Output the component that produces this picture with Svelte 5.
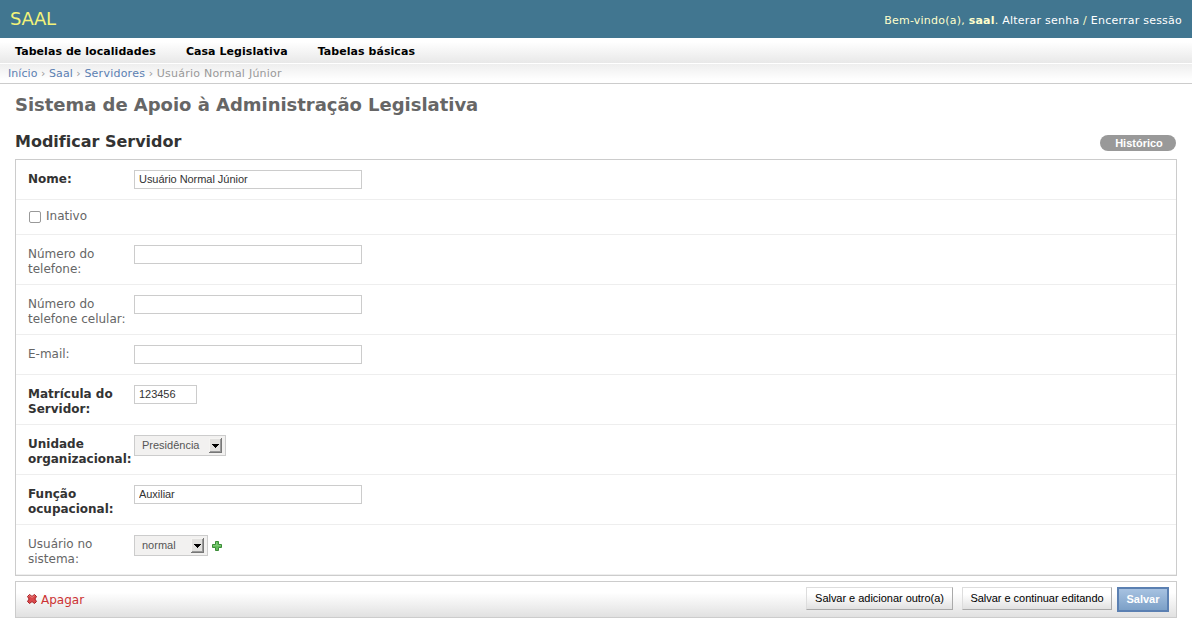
<script>
  const menu = ['Tabelas de localidades', 'Casa Legislativa', 'Tabelas básicas'];
  const rows = [
    { id: 'nome', label: 'Nome:', required: true, type: 'text', value: 'Usuário Normal Júnior', height: 40 },
    { id: 'inativo', label: 'Inativo', type: 'check', height: 35 },
    { id: 'telefone', label: 'Número do telefone:', type: 'text', value: '', height: 50 },
    { id: 'celular', label: 'Número do telefone celular:', type: 'text', value: '', height: 50 },
    { id: 'email', label: 'E-mail:', type: 'text', value: '', height: 40 },
    { id: 'matricula', label: 'Matrícula do Servidor:', required: true, type: 'text', value: '123456', width: 63, height: 50 },
    { id: 'unidade', label: 'Unidade organizacional:', required: true, type: 'select', value: 'Presidência', width: 92, height: 50 },
    { id: 'funcao', label: 'Função ocupacional:', required: true, type: 'text', value: 'Auxiliar', height: 50 },
    { id: 'usuario', label: 'Usuário no sistema:', type: 'select', value: 'normal', width: 74, add: true, height: 50 }
  ];
</script>

<header>
  <h1>SAAL</h1>
  <div class="user">Bem-vindo(a), <b>saal</b>. <a href="#senha">Alterar senha</a> / <a href="#sair">Encerrar sessão</a></div>
</header>
<nav class="menu">
  {#each menu as item}<a href="#menu">{item}</a>{/each}
</nav>
<div class="crumbs"><a href="#inicio">Início</a> › <a href="#saal">Saal</a> › <a class="wide" href="#servidores">Servidores</a> › <span class="wide">Usuário Normal Júnior</span></div>

<main>
  <h2>Sistema de Apoio à Administração Legislativa</h2>
  <div class="heading">
    <h3>Modificar Servidor</h3>
    <a class="history" href="#historico">Histórico</a>
  </div>
  <form>
    <div class="module">
      {#each rows as row}
        <div class="row" style="height: {row.height}px">
          {#if row.type === 'check'}
            <input class="check" id={row.id} type="checkbox" />
            <label class="inline" for={row.id}>{row.label}</label>
          {:else}
            <label class:required={row.required} for={row.id}>{row.label}</label>
            {#if row.type === 'text'}
              <input class="text" id={row.id} type="text" value={row.value} style="width: {row.width ?? 228}px" />
            {:else}
              <button class="select" id={row.id} type="button" style="width: {row.width}px">
                <span>{row.value}</span>
                <svg width="13" height="15" viewBox="0 0 13 15" shape-rendering="crispEdges">
                  <path fill="#e2e1df" d="M0 0h13v15H0z" />
                  <path fill="#f5f4f2" d="M0 0h13v1H1v14H0z" />
                  <path fill="#777" d="M12 0h1v15H0v-1h12z" />
                  <path fill="#999" d="M11 1h1v13H1v-1h10z" />
                  <path fill="#000" d="M3 6h7v1H9v1H8v1H7v1H6V9H5V8H4V7H3z" />
                </svg>
              </button>
            {/if}
            {#if row.add}
              <svg class="add" width="10" height="10" viewBox="0 0 10 10">
                <path fill="#63bd5b" stroke="#3c8c38" d="M3.5.5h3v3h3v3h-3v3h-3v-3h-3v-3h3z" />
                <path fill="none" stroke="#8bd282" d="M4.5 1v3.5H1M5 4.5h4" opacity=".65" />
              </svg>
            {/if}
          {/if}
        </div>
      {/each}
    </div>
    <div class="submit">
      <a class="delete" href="#apagar">
        <svg width="10" height="10" viewBox="0 0 10 10">
          <path fill="#d9484b" stroke="#a41e22" stroke-linejoin="round" d="M2.5.5 5 2.4 7.5.5l2 2L7.9 5l1.6 2.5-2 2L5 7.6 2.5 9.5l-2-2L2.1 5 .5 2.5z" />
          <path fill="none" stroke="#ee8a86" stroke-width=".8" d="M1.5 2.5l1-1L5 3.5l2.5-2" />
        </svg>
        <span>Apagar</span>
      </a>
      <button class="btn another" type="button">Salvar e adicionar outro(a)</button>
      <button class="btn continue" type="button">Salvar e continuar editando</button>
      <button class="btn default" type="button">Salvar</button>
    </div>
  </form>
</main>

<style>
  :global(body) { margin: 0; background: #fff; color: #333; font: 12px/15px "DejaVu Sans", sans-serif; }
  a { text-decoration: none; color: #5b80b2; }
  header { display: flex; justify-content: space-between; align-items: center; height: 38px; box-sizing: border-box; padding: 0 10px; background: #417690; color: #ffc; }
  h1 { margin: 0; font-size: 18px; line-height: 22px; font-weight: 400; color: #f4f379; letter-spacing: -.3px; }
  .user { font-size: 11px; line-height: 14px; padding-top: 3px; letter-spacing: .23px; }
  .user a { color: #fff; }
  .menu { display: flex; gap: 30px; height: 25px; box-sizing: border-box; padding: 7px 15px 0; background: linear-gradient(#fff 15%, #e8e8e8); margin-bottom: 1px; }
  .menu a { color: #000; font-size: 11px; line-height: 14px; font-weight: 700; letter-spacing: .06px; }
  .crumbs { height: 20px; box-sizing: border-box; padding: 3px 8px 0; border-bottom: 1px solid #ccc; background: linear-gradient(#eee, #fff 85%); font-size: 11px; line-height: 14px; color: #999; letter-spacing: .06px; }
  .wide { letter-spacing: .24px; }
  main { padding: 0 15px; }
  h2 { margin: 0; padding-top: 9px; font-size: 18px; line-height: 24px; color: #666; letter-spacing: -.03px; }
  .heading { display: flex; justify-content: space-between; height: 42px; align-items: flex-start; }
  h3 { margin: 0; padding-top: 15px; font-size: 16px; line-height: 20px; color: #333; letter-spacing: -.01px; }
  .history { margin: 18px 1px 0 0; width: 76px; height: 16px; border-radius: 8px; background: #999; color: #fff; font: bold 11px/16px "Liberation Sans", Arial, sans-serif; text-align: center; text-indent: 2px; }
  .module { border: 1px solid #ccc; }
  .row { display: flex; align-items: flex-start; box-sizing: border-box; padding: 10px 12px 0; border-bottom: 1px solid #eee; }
  label { width: 106px; padding-top: 2px; flex: none; color: #666; }
  .required { color: #333; font-weight: 700; }
  .text { box-sizing: border-box; height: 19px; margin: 0; padding: 0 4px 2px; border: 1px solid #ccc; background: #fff; color: #333; font: 11px/15px "Liberation Sans", Arial, sans-serif; letter-spacing: -.04px; outline: 0; }
  .check { appearance: none; box-sizing: border-box; width: 12px; height: 12px; margin: 1px 5px 0 1px; border: 1px solid #999; border-radius: 2px; background: #fff; }
  .inline { padding-top: 0; margin-top: -1px; }
  .select { display: flex; align-items: center; justify-content: space-between; box-sizing: border-box; height: 21px; margin: 0; padding: 0 3px 0 7px; border: 1px solid #ccc; background: #f2f1f0; color: #555; font: 11px/15px "Liberation Sans", Arial, sans-serif; }
  .add { margin: 6px 0 0 4px; }
  .submit { display: flex; align-items: flex-start; box-sizing: border-box; height: 37px; margin-top: 5px; padding: 5px 7px 0 11px; border: 1px solid #ccc; background: linear-gradient(#fff 30%, #e1e1e1); }
  .delete { display: flex; align-items: center; gap: 4px; margin: 6px auto 0 0; color: #c33; }
  .delete svg { margin-top: -3px; }
  .btn { box-sizing: border-box; height: 23px; padding: 0; border: 1px solid; border-color: #ddd #aaa #aaa #ddd; background: linear-gradient(#fff 30%, #e1e1e1); color: #000; font: 11px/15px "Liberation Sans", Arial, sans-serif; letter-spacing: -.03px; }
  .another { width: 147px; margin-right: 9px; }
  .continue { width: 150px; margin-right: 5px; }
  .default { width: 52px; height: 25px; border: 2px solid #5b80b2; background: linear-gradient(#a7c2e1, #7ca0c7); color: #fff; font-weight: 700; }
</style>
